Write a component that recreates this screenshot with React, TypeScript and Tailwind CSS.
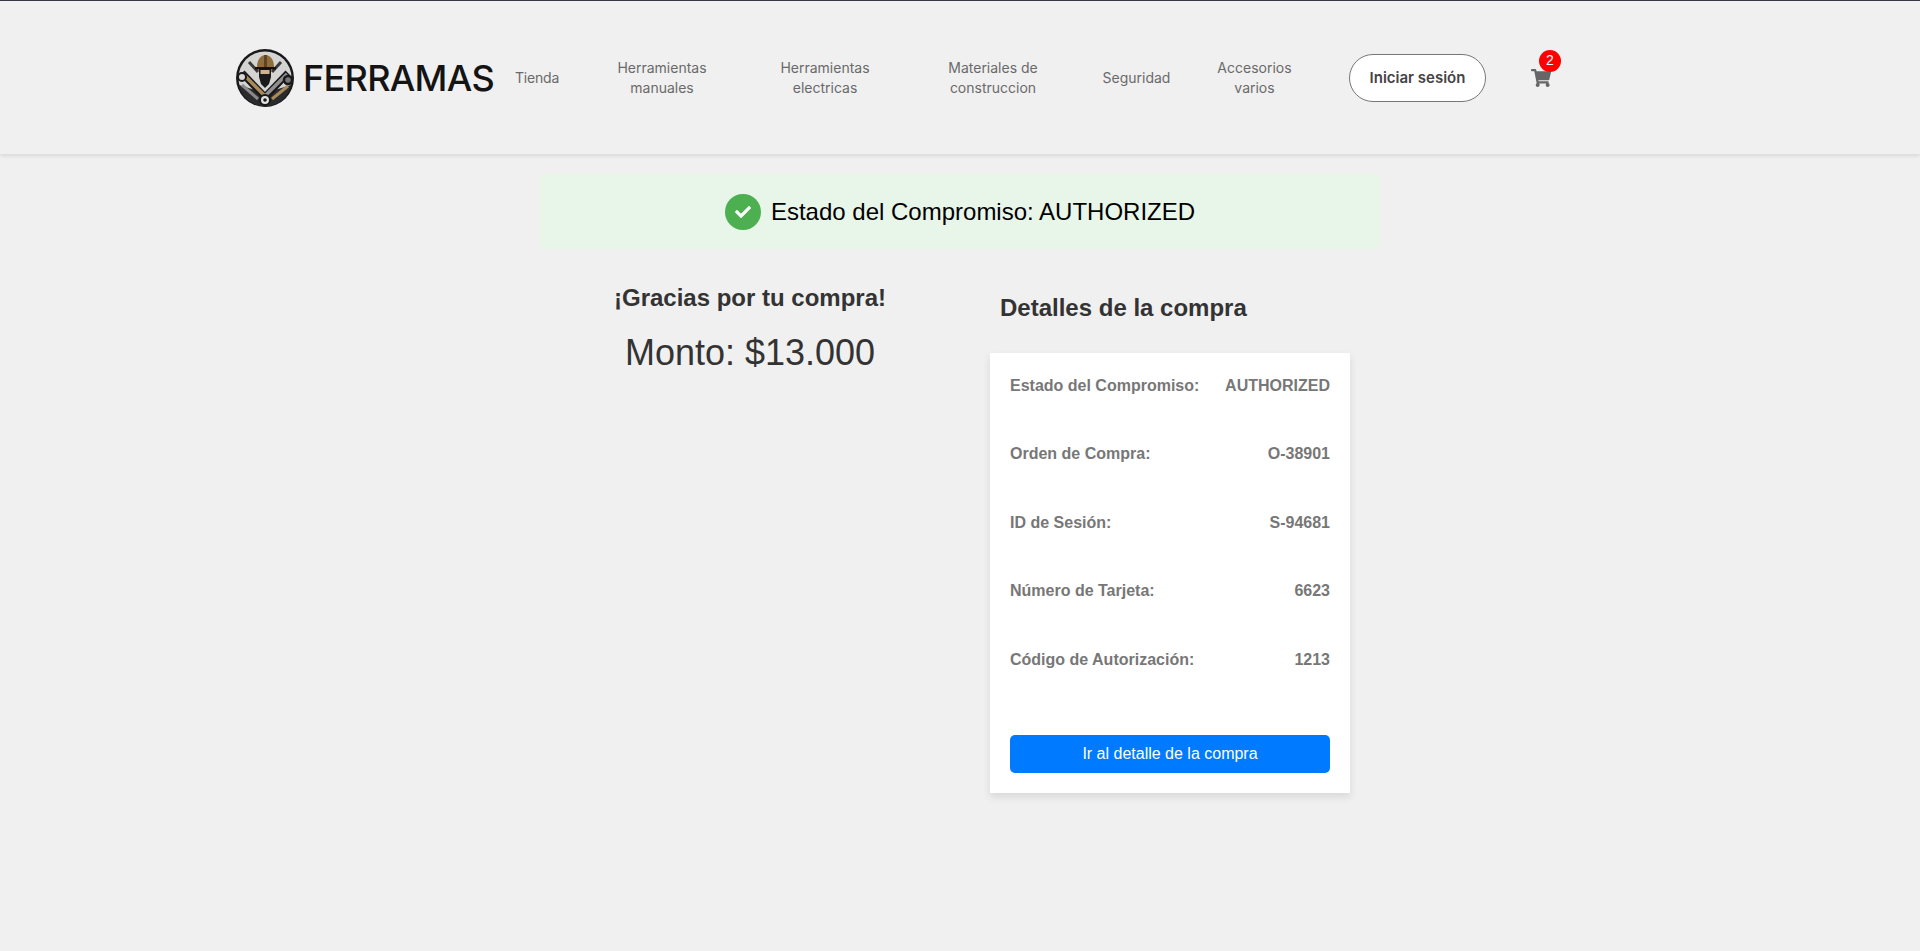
import { FaCheck, FaShoppingCart } from "react-icons/fa";

const navItems = [
  { label: ["Tienda"], width: "w-[70px] text-left tracking-[-0.2px]" },
  { label: ["Herramientas", "manuales"], width: "w-[154px] text-center" },
  { label: ["Herramientas", "electricas"], width: "w-[172px] text-center" },
  { label: ["Materiales de", "construccion"], width: "w-[164px] text-center" },
  { label: ["Seguridad"], width: "w-[123px] text-center" },
  { label: ["Accesorios", "varios"], width: "w-[113px] text-center" },
];

const details = [
  ["Estado del Compromiso:", "AUTHORIZED"],
  ["Orden de Compra:", "O-38901"],
  ["ID de Sesión:", "S-94681"],
  ["Número de Tarjeta:", "6623"],
  ["Código de Autorización:", "1213"],
];

function Logo() {
  return (
    <svg viewBox="0 0 58 58" className="h-[58px] w-[58px] shrink-0">
      <circle cx="29" cy="29" r="29" fill="#19191b" />
      <circle cx="29" cy="29" r="26.5" fill="#d4d4d2" />
      <path d="M3 36 A26.5 26.5 0 0 0 55 36 L29 44 Z" fill="#2b2b2d" />
      {/* crossed tools */}
      <path d="M6 24 L29 48" stroke="#19191b" strokeWidth="7" />
      <path d="M52 24 L29 48" stroke="#19191b" strokeWidth="7" />
      <path d="M7 25 L29 47" stroke="#a98a58" strokeWidth="3.5" />
      <path d="M51 25 L29 47" stroke="#8f8f8f" strokeWidth="3.5" />
      <path d="M6 36 L22 50" stroke="#8a8a8a" strokeWidth="3" />
      <path d="M52 37 L36 50" stroke="#a98a58" strokeWidth="3" />
      <path d="M13 13 L22 23" stroke="#3a3a3c" strokeWidth="3" />
      <path d="M45 13 L36 23" stroke="#3a3a3c" strokeWidth="3" />
      {/* gears */}
      <circle cx="6" cy="28" r="4" fill="#d8d8d6" stroke="#19191b" strokeWidth="2" />
      <circle cx="52" cy="31" r="4" fill="#777" stroke="#19191b" strokeWidth="2.5" />
      <circle cx="29" cy="51" r="5" fill="#e2e2e0" stroke="#19191b" strokeWidth="2" />
      <circle cx="29" cy="51" r="1.8" fill="#19191b" />
      {/* worker */}
      <path d="M23 19 H35 V28 L33 35 L29 39 L25 35 L23 28 Z" fill="#1a1a1c" />
      <path d="M24.5 21 H33.5 V25 H24.5 Z" fill="#c9b596" />
      <path d="M21 18 C21 2 38 2 38 18 Z" fill="#8f6d3c" />
      <path d="M28 6 H31 V18 H28 Z" fill="#5d4522" />
      <path d="M19 18 H40 V20.5 H19 Z" fill="#111113" />
    </svg>
  );
}

function Header() {
  return (
    <header className="h-[154px] border-t border-[#343a40] bg-[#f0f0f0] shadow-[0_2px_4px_rgba(0,0,0,0.1)]">
      <div className="flex h-full items-center pl-[236px]">
        <Logo />
        <span className="ml-[9px] w-[212px] text-[36px] font-medium tracking-[-0.7px] text-[#141414] [font-family:Inter,sans-serif]">
          FERRAMAS
        </span>
        <nav className="flex items-center">
          {navItems.map((item) => (
            <a
              key={item.width}
              className={`${item.width} text-[14px] leading-[20px] text-[#6a6a6a] [font-family:Inter,sans-serif]`}
            >
              {item.label.map((line) => (
                <span key={line} className="block">
                  {line}
                </span>
              ))}
            </a>
          ))}
        </nav>
        <button className="ml-[38px] h-[48px] w-[137px] rounded-full border border-[#777] bg-white pt-px text-[15px] font-semibold text-[#444] [font-family:Inter,sans-serif]">
          Iniciar sesión
        </button>
        <div className="relative ml-[45px] text-[#666]">
          <FaShoppingCart className="h-[18px] w-[20px]" />
          <span className="absolute left-[8px] top-[-19px] flex h-[22px] w-[22px] items-center justify-center rounded-full bg-[#f00] text-[14px] text-white [font-family:'Liberation_Sans',sans-serif]">
            2
          </span>
        </div>
      </div>
    </header>
  );
}

export default function App() {
  return (
    <div className="min-h-[951px] bg-[#f0f0f0] [font-family:'Liberation_Sans',Arial,sans-serif]">
      <Header />
      <main className="mx-auto w-[840px] pt-[20px]">
        <div className="flex h-[75px] items-center justify-center gap-[10px] rounded bg-[#e8f5e9] text-[24px] text-black">
          <span className="flex h-[36px] w-[36px] items-center justify-center rounded-full bg-[#4caf50] text-white">
            <FaCheck className="h-[16px] w-[16px]" />
          </span>
          Estado del Compromiso: AUTHORIZED
        </div>

        <div className="flex">
          <section className="w-[420px] pt-[35px] text-center text-[#333]">
            <h1 className="text-[24px] font-bold leading-[28px]">¡Gracias por tu compra!</h1>
            <p className="mt-[20px] text-[36px] leading-[42px]">Monto: $13.000</p>
          </section>

          <section className="ml-[30px] w-[360px]">
            <h2 className="mt-[45px] ml-[10px] text-[24px] font-bold leading-[28px] text-[#333]">
              Detalles de la compra
            </h2>
            <div className="mt-[31px] h-[440px] bg-white px-[20px] pt-[24px] shadow-[0_4px_8px_rgba(0,0,0,0.1)]">
              {details.map(([label, value]) => (
                <div
                  key={label}
                  className="flex h-[68.4px] justify-between text-[16px] font-bold leading-[18px] text-[#777]"
                >
                  <span>{label}</span>
                  <span>{value}</span>
                </div>
              ))}
              <button className="mt-[16px] h-[38px] w-full rounded-[5px] bg-[#007bff] text-[16px] text-white">
                Ir al detalle de la compra
              </button>
            </div>
          </section>
        </div>
      </main>
    </div>
  );
}
